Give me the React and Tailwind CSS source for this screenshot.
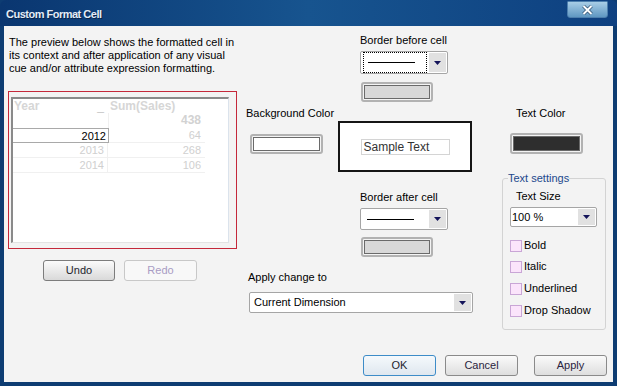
import React from 'react'

function Arrow() {
  return (
    <svg width="7" height="4" viewBox="0 0 7 4">
      <path d="M0 0h7L3.5 4z" fill="#14145a" />
    </svg>
  )
}

function Dropdown({ className, children }) {
  return (
    <div className={`flex border border-[#a5a5a5] rounded-[2px] bg-white ${className}`}>
      <div className="flex-1 flex items-center min-w-0">{children}</div>
      <div className="w-[17px] my-[1px] mr-[1px] bg-[#e1e1e1] flex items-center justify-center">
        <Arrow />
      </div>
    </div>
  )
}

function LineSample({ focus }) {
  return (
    <div className={`flex-1 h-full flex items-center m-[2px] pl-[4px] ${focus ? 'border border-dotted border-black' : ''}`}>
      <div className="w-[47px] h-px bg-black" />
    </div>
  )
}

function Swatch({ className, fill }) {
  return (
    <div className={`flex border-2 border-[#b2b2b2] rounded-[3px] bg-[#f4f4f4] p-px ${className}`}>
      <div className={`flex-1 border border-[#6a6a6a] ${fill}`} />
    </div>
  )
}

function Check({ label }) {
  return (
    <div className="flex items-center h-[13px] gap-[2px]">
      <div className="w-[12px] h-[12px] border border-[#c9a6d6] bg-[#fbe4fb]" />
      <span>{label}</span>
    </div>
  )
}

function Btn({ children, className }) {
  return (
    <div className={`h-[21px] w-[73px] flex items-center justify-center rounded-[3px] border bg-gradient-to-b ${className}`}>
      {children}
    </div>
  )
}

export default function App() {
  return (
    <div className="w-[617px] h-[386px] flex flex-col bg-[#0d3c72] font-['Liberation_Sans',Arial,sans-serif] text-[11px] leading-[13px] text-black">
      {/* title bar */}
      <div className="h-[26px] flex items-start rounded-t-[6px] bg-gradient-to-r from-[#0a3670] via-[#17548f] to-[#0e4080]">
        <div className="pl-[6px] pt-[8px] font-bold text-[11px] tracking-[-0.5px] text-[#e3ecf8] [text-shadow:1px_1px_0_#0a2348]">
          Custom Format Cell
        </div>
        <div className="ml-auto mr-[9px] mt-px w-[41px] h-[17px] rounded-b-[3px] rounded-t-[1px] border border-[#4d7fae] bg-gradient-to-b from-[#a8cde6] to-[#5f98c2] flex items-center justify-center">
          <svg width="11" height="10" viewBox="0 0 11 10">
            <path d="M1.5 1l8 8M9.5 1l-8 8" stroke="#2c4f72" strokeWidth="3.5" />
            <path d="M1.5 1l8 8M9.5 1l-8 8" stroke="#ffffff" strokeWidth="2" />
          </svg>
        </div>
      </div>

      {/* body */}
      <div className="flex-1 mx-[4px] mb-[4px] bg-[#f3f3f3] flex flex-col pt-[8px]">
        <div className="flex">
          {/* left column */}
          <div className="ml-[4px] w-[229px] pt-[2px] flex flex-col">
            <p className="pl-px">
              The preview below shows the formatted cell in<br />
              its context and after application of any visual<br />
              cue and/or attribute expression formatting.
            </p>
            <div className="mt-[16px] h-[158px] border border-[#c4283a] pt-[5px] pl-[2px]">
              <div className="w-[218px] h-[146px] bg-white border-l-2 border-t-2 border-r border-b border-[#8a8a8a] border-r-[#dbe3ec] border-b-[#e3e3e3]">
                <div className="w-[192px]">
                  <div className="flex h-[14px] text-[12px] font-bold text-[#d6d6d6] leading-[14px]">
                    <div className="w-[95px] pl-px flex justify-between pr-[4px]">
                      <span>Year</span>
                      <span className="font-normal text-[#c8c8c8]">_</span>
                    </div>
                    <div className="flex-1 pl-[2px]">Sum(Sales)</div>
                  </div>
                  <div className="flex h-[15px] text-[12px] font-bold text-[#d2d2d2] leading-[15px]">
                    <div className="w-[95px]" />
                    <div className="flex-1 text-right pr-[4px] border-l border-[#f0f0f0]">438</div>
                  </div>
                  <div className="flex h-[15px] leading-[14px]">
                    <div className="w-[96px] border-y border-r border-[#a9a9a9] text-right pr-[2px]">2012</div>
                    <div className="flex-1 text-right pr-[4px] text-[#d0d0d0] border-b border-[#f0f0f0]">64</div>
                  </div>
                  <div className="flex h-[15px] leading-[14px] text-[#d0d0d0] border-b border-[#f0f0f0]">
                    <div className="w-[95px] text-right pr-[3px] border-r border-[#f0f0f0]">2013</div>
                    <div className="flex-1 text-right pr-[4px]">268</div>
                  </div>
                  <div className="flex h-[15px] leading-[14px] text-[#d0d0d0] border-b border-[#f0f0f0]">
                    <div className="w-[95px] text-right pr-[3px] border-r border-[#f0f0f0]">2014</div>
                    <div className="flex-1 text-right pr-[4px]">106</div>
                  </div>
                </div>
              </div>
            </div>
            <div className="mt-[11px] flex gap-[9px] pl-[35px]">
              <div className="h-[21px] w-[72px] flex items-center justify-center rounded-[3px] border border-[#7c7c7c] bg-gradient-to-b from-[#fbfbfb] to-[#d9d9d9] text-[#1e1e2e]">
                Undo
              </div>
              <div className="h-[21px] w-[73px] flex items-center justify-center rounded-[3px] border border-[#c8c8c8] bg-[#f8f8f8] text-[#a99cc4]">
                Redo
              </div>
            </div>
          </div>

          {/* right section */}
          <div className="ml-[9px] w-[360px] flex flex-col">
            <div className="pl-[114px] flex flex-col items-start">
              <span>Border before cell</span>
              <Dropdown className="mt-[4px] w-[88px] h-[23px]">
                <LineSample focus />
              </Dropdown>
              <Swatch className="mt-[8px] ml-px w-[72px] h-[20px]" fill="bg-[#d8d8d8]" />
            </div>

            <div className="flex mt-[5px]">
              <div className="w-[92px] flex flex-col items-start">
                <span>Background Color</span>
                <Swatch className="mt-[14px] ml-[4px] w-[73px] h-[20px]" fill="bg-white" />
              </div>
              <div className="mt-[14px] w-[134px] h-[51px] border-2 border-[#151515] bg-white flex items-center justify-center">
                <div className="w-[89px] h-[16px] border border-[#d4d4d4] text-[12px] leading-[14px] pl-[2px] text-[#333]">
                  Sample Text
                </div>
              </div>
              <div className="ml-[38px] flex flex-col items-start">
                <span className="pl-[6px]">Text Color</span>
                <Swatch className="mt-[13px] w-[73px] h-[21px]" fill="bg-[#2e2e2e]" />
              </div>
            </div>

            <div className="flex">
              <div className="w-[256px] flex flex-col items-start">
                <div className="pl-[114px] flex flex-col items-start">
                  <span className="mt-[19px]">Border after cell</span>
                  <Dropdown className="mt-[4px] w-[88px] h-[22px]">
                    <LineSample />
                  </Dropdown>
                  <Swatch className="mt-[7px] ml-px w-[72px] h-[20px]" fill="bg-[#d8d8d8]" />
                </div>
                <span className="mt-[14px] pl-[2px]">Apply change to</span>
                <Dropdown className="mt-[8px] ml-[3px] w-[224px] h-[21px]">
                  <span className="pl-[4px]">Current Dimension</span>
                </Dropdown>
              </div>
              <fieldset className="w-[104px] border border-[#d3d3d3] rounded-[3px]">
                <legend className="ml-[5px] text-[#22488c]">Text settings</legend>
                <div className="pl-[7px] pb-[12px] flex flex-col items-start">
                  <span className="mt-[5px] pl-[6px]">Text Size</span>
                  <Dropdown className="mt-[4px] w-[87px] h-[20px]">
                    <span className="pl-px">100 %</span>
                  </Dropdown>
                  <div className="mt-[12px]"><Check label="Bold" /></div>
                  <div className="mt-[8px]"><Check label="Italic" /></div>
                  <div className="mt-[9px]"><Check label="Underlined" /></div>
                  <div className="mt-[9px]"><Check label="Drop Shadow" /></div>
                </div>
              </fieldset>
            </div>
          </div>
        </div>

        {/* dialog buttons */}
        <div className="mt-auto mb-[6px] flex pl-[359px]">
          <Btn className="border-[#3d8cc8] from-[#f5f9fc] to-[#dfe7ef] text-[#1e1e2e]">OK</Btn>
          <Btn className="ml-[9px] border-[#8a8a8a] from-[#fafafa] to-[#dedede] text-[#2a2440]">Cancel</Btn>
          <Btn className="ml-[16px] border-[#8a8a8a] from-[#fafafa] to-[#dedede] text-[#2a2440]">Apply</Btn>
        </div>
      </div>
    </div>
  )
}
